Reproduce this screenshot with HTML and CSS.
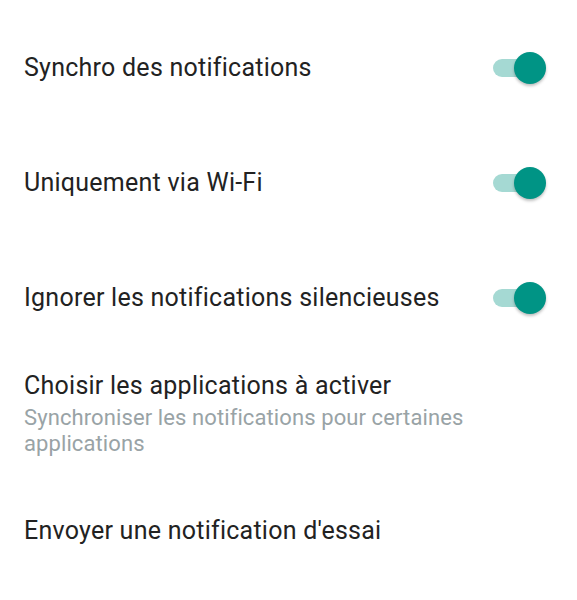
FILE: index.html
```html
<!DOCTYPE html>
<html lang="fr">
<head>
    <meta charset="UTF-8">
    <meta name="viewport" content="width=device-width, initial-scale=1.0">
    <title>Notifications</title>
    <link rel="stylesheet" href="styles.css">
</head>
<body>
    <div class="settings">
        <div class="row toggle-row">
            <span class="title">Synchro des notifications</span>
            <span class="switch on"><span class="thumb"></span></span>
        </div>
        <div class="row toggle-row">
            <span class="title">Uniquement via Wi-Fi</span>
            <span class="switch on"><span class="thumb"></span></span>
        </div>
        <div class="row toggle-row">
            <span class="title">Ignorer les notifications silencieuses</span>
            <span class="switch on"><span class="thumb"></span></span>
        </div>
        <div class="row text-row">
            <div>
                <div class="title">Choisir les applications à activer</div>
                <div class="summary">Synchroniser les notifications pour certaines applications</div>
            </div>
        </div>
        <div class="row plain-row">
            <span class="title">Envoyer une notification d'essai</span>
        </div>
    </div>
</body>
</html>
```

FILE: styles.css
```css
body {
    margin: 0;
    padding: 0;
    background-color: #fff;
    font-family: 'Roboto', sans-serif;
}
.settings {
    padding-top: 10px;
}
.row {
    display: flex;
    align-items: center;
    justify-content: space-between;
    padding: 0 36px 0 24px;
}
.toggle-row {
    height: 115px;
}
.text-row {
    height: 118px;
}
.plain-row {
    height: 115px;
}
.title {
    font-size: 25px;
    line-height: 30px;
    letter-spacing: 0.25px;
    color: #222;
}
.summary {
    font-size: 22px;
    line-height: 26px;
    letter-spacing: 0.1px;
    color: #99a3a6;
    margin-top: 4px;
    max-width: 470px;
}
.switch {
    position: relative;
    width: 48px;
    height: 18px;
    border-radius: 9px;
    background-color: #a5d9d3;
}
.thumb {
    position: absolute;
    top: -7px;
    right: -5px;
    width: 32px;
    height: 32px;
    border-radius: 50%;
    background-color: #009485;
    box-shadow: 0 2px 3px rgba(0,0,0,0.25);
}
```
